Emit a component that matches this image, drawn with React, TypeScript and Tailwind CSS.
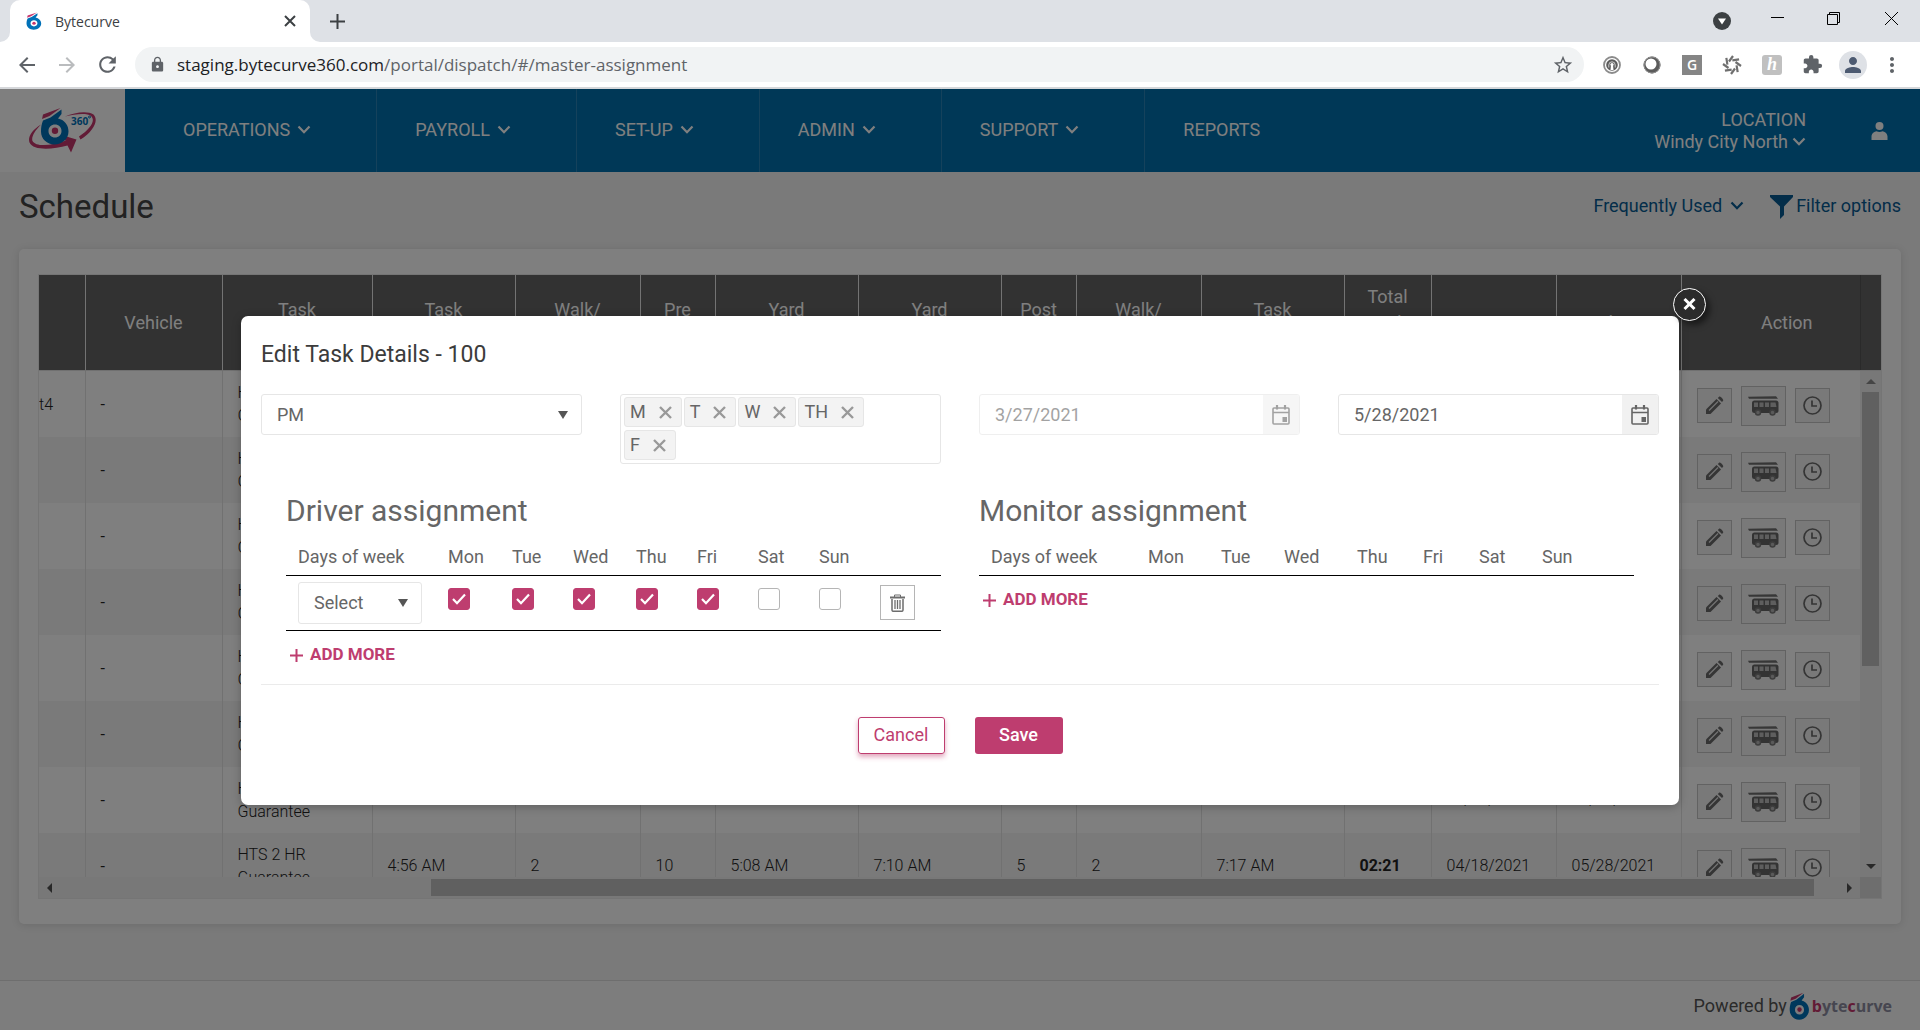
import { ReactNode } from "react";
import {
  MdArrowBack,
  MdArrowForward,
  MdExtension,
  MdLock,
  MdMoreVert,
  MdPerson,
  MdRefresh,
  MdStarBorder,
} from "react-icons/md";

const MENU = [
  { label: "OPERATIONS", hasChildren: true, className: "pl-[58px] pr-[65px]" },
  { label: "PAYROLL", hasChildren: true, className: "pl-[38px] pr-[65px]" },
  { label: "SET-UP", hasChildren: true, className: "pl-[38px] pr-[65px]" },
  { label: "ADMIN", hasChildren: true, className: "pl-[38px] pr-[65px]" },
  { label: "SUPPORT", hasChildren: true, className: "pl-[38px] pr-[65px]" },
  { label: "REPORTS", hasChildren: false, className: "pl-[38px] pr-[38px]" },
];

const COLUMNS = [
  { lines: [""], width: "w-[46px]" },
  { lines: ["Vehicle"], width: "w-[137px]" },
  { lines: ["Task", "Type"], width: "w-[150px]" },
  { lines: ["Task", "Start"], width: "w-[143px]" },
  { lines: ["Walk/", "Drive"], width: "w-[125px]" },
  { lines: ["Pre", "Trip"], width: "w-[75px]" },
  { lines: ["Yard", "Out"], width: "w-[143px]" },
  { lines: ["Yard", "In"], width: "w-[143px]" },
  { lines: ["Post", "Trip"], width: "w-[75px]" },
  { lines: ["Walk/", "Drive"], width: "w-[125px]" },
  { lines: ["Task", "End"], width: "w-[143px]" },
  { lines: ["Total", "Task", "Hours"], width: "w-[87px]" },
  { lines: ["Start Date"], width: "w-[125px]" },
  { lines: ["End Date"], width: "w-[125px]" },
];

const ROWS = ["t4", "", "", "", "", "", "", ""].map((route, id) => ({
  id,
  route,
  vehicle: "-",
  type: ["HTS 2 HR", "Guarantee"],
  cells: ["4:56 AM", "2", "10", "5:08 AM", "7:10 AM", "5", "2", "7:17 AM"],
  total: "02:21",
  start: "04/18/2021",
  end: "05/28/2021",
}));

const DAYS = ["Mon", "Tue", "Wed", "Thu", "Fri", "Sat", "Sun"];
const CHECKED = ["Mon", "Tue", "Wed", "Thu", "Fri"];
const DRIVER_WIDTHS = [
  "w-[150px]",
  "w-[64px]",
  "w-[61px]",
  "w-[63px]",
  "w-[61px]",
  "w-[61px]",
  "w-[61px]",
  "w-[61px]",
];
const MONITOR_WIDTHS = [
  "w-[157px]",
  "w-[73px]",
  "w-[63px]",
  "w-[73px]",
  "w-[66px]",
  "w-[56px]",
  "w-[63px]",
  "w-[61px]",
];

function Chevron() {
  return (
    <svg width="14" height="9" viewBox="0 0 14 9" fill="none">
      <path d="M1.5 1.5 7 7.2l5.5-5.7" stroke="currentColor" strokeWidth="2.2" />
    </svg>
  );
}

function BrandShape() {
  return (
    <>
      <path
        fill="#0071b8"
        fillRule="evenodd"
        d="M41.500 9.500 30.500 17.500 23 20.500C21.500 24 21 28 21 31.500 21 39 27 44.500 34.500 44.500S48.500 39 48.500 31.500C48.500 26 45.500 21.500 41 19.500L38 18.500 41.500 14ZM35 24.500C38.600 24.500 41.500 27 41.500 31S38.600 37.500 35 37.500 28.500 35 28.500 31 31.400 24.500 35 24.500Z"
      />
      <path fill="#c5366c" d="M23 14.500 40.500 8 29.500 16 22 19Z" />
      <circle cx="35" cy="30.800" r="3.200" fill="#c5366c" />
    </>
  );
}

function BrandMark({ width, height }: { width: number; height: number }) {
  return (
    <svg width={width} height={height} viewBox="20 7 30 38" preserveAspectRatio="none">
      <BrandShape />
    </svg>
  );
}

function OrbitLogo() {
  return (
    <svg width="70" height="46" viewBox="8 8 70 46">
      <path
        fill="#c5366c"
        d="M45 16.500C55 12 68 10.500 73.500 14.500 79 20 74 31 60.500 39.500L59 36.500C70.500 29 76 20.500 71 16 66.500 12.500 55 14 45 16.500Z"
      />
      <path
        fill="#c5366c"
        d="M21 24.500C12 30 7.500 37 9.500 42.500 13 51 33 49.500 47.500 45.500L51 52.500 56.500 39.500 43 35.500 45.500 40.500C33 45.500 16 47.500 12.500 41 11 37 15 30.500 21 24.500Z"
      />
      <BrandShape />
      <text x="51" y="25" fontSize="10" fontWeight="700" fill="#0071b8" fontFamily="Open Sans, sans-serif">
        360
      </text>
      <circle cx="69.500" cy="17" r="1" fill="none" stroke="#0071b8" />
    </svg>
  );
}

function BrowserChrome() {
  return (
    <div className="font-['Open_Sans',sans-serif]">
      <div className="flex h-[42px] items-end bg-[#dee1e6] text-[#3c4043]">
        <svg className="h-[10px] w-[10px]" viewBox="0 0 10 10">
          <path d="M10 0v10H0A10 10 0 0 0 10 0Z" fill="#fff" />
        </svg>
        <div className="flex h-[42px] w-[300px] items-center rounded-t-[10px] bg-white pl-4 pr-[14px]">
          <BrandMark width={16} height={18} />
          <span className="ml-[13px] flex-1 text-[14px]">Bytecurve</span>
          <button aria-label="Close tab">
            <svg width="12" height="12" viewBox="0 0 12 12" stroke="currentColor" strokeWidth="2">
              <path d="m1 1 10 10M11 1 1 11" />
            </svg>
          </button>
        </div>
        <svg className="h-[10px] w-[10px]" viewBox="0 0 10 10">
          <path d="M0 0v10h10A10 10 0 0 1 0 0Z" fill="#fff" />
        </svg>
        <button aria-label="New tab" className="ml-[10px] flex h-[42px] items-center">
          <svg width="15" height="15" viewBox="0 0 15 15" stroke="currentColor" strokeWidth="2">
            <path d="M7.500 0v15M0 7.500h15" />
          </svg>
        </button>
        <div className="ml-auto flex h-[42px] items-start pr-[22px] pt-3 text-black">
          <svg className="mr-10" width="18" height="18" viewBox="0 0 18 18">
            <circle cx="9" cy="9" r="9" fill="#3c4043" />
            <path d="M5 6.500h8l-4 6Z" fill="#fff" />
          </svg>
          <button aria-label="Minimize" className="mr-[43px]">
            <svg width="13" height="13" viewBox="0 0 13 13">
              <path d="M0 5.500h13" stroke="currentColor" />
            </svg>
          </button>
          <button aria-label="Restore" className="mr-[45px]">
            <svg width="13" height="13" viewBox="0 0 13 13" fill="none" stroke="currentColor">
              <path d="M.5 2.500h10v10H.5zM2.500 2.500v-2h10v10h-2" />
            </svg>
          </button>
          <button aria-label="Close window">
            <svg width="13" height="13" viewBox="0 0 13 13" stroke="currentColor">
              <path d="m0 0 13 13M13 0 0 13" />
            </svg>
          </button>
        </div>
      </div>
      <div className="flex h-[47px] items-center border-b-2 border-[#d5d7da] bg-white pl-[15px] pr-4 text-[#5f6368]">
        <button aria-label="Back" className="mr-4">
          <MdArrowBack size={24} />
        </button>
        <button aria-label="Forward" className="mr-4 text-[#babcbe]">
          <MdArrowForward size={24} />
        </button>
        <button aria-label="Reload" className="mr-[15px]">
          <MdRefresh size={25} />
        </button>
        <div className="flex h-[35px] flex-1 items-center rounded-full bg-[#f1f3f4] pl-[14px] pr-[10px]">
          <MdLock size={17} />
          <span className="ml-[11px] flex-1 text-[17px]">
            <span className="text-[#202124]">staging.bytecurve360.com</span>
            /portal/dispatch/#/master-assignment
          </span>
          <button aria-label="Bookmark this page">
            <MdStarBorder size={22} />
          </button>
        </div>
        <div className="ml-[18px] flex items-center gap-5">
          <svg width="20" height="20" viewBox="0 0 20 20" fill="none">
            <circle cx="10" cy="10" r="8" stroke="#8b8b8b" strokeWidth="1.800" />
            <circle cx="10" cy="10" r="5.800" fill="#5c5c5c" />
            <path d="M6.800 12.500V10a3.200 3.200 0 0 1 6.400 0v2.500" stroke="#ccc" strokeWidth="1" />
            <circle cx="10" cy="9.500" r="1.600" fill="#fff" />
            <path d="M9 10h2l.5 5h-3Z" fill="#fff" />
          </svg>
          <svg width="20" height="20" viewBox="0 0 20 20">
            <circle cx="10" cy="10" r="8.500" fill="#5b5b5b" />
            <circle cx="9" cy="9" r="5.500" fill="#fff" />
            <circle cx="10" cy="10" r="8" fill="none" stroke="#8f8f8f" />
          </svg>
          <span className="flex h-5 w-5 items-center justify-center bg-[#858585] text-[14px] font-semibold text-white">
            G
          </span>
          <svg width="20" height="20" viewBox="0 0 20 20" stroke="#6f6f6f" strokeWidth="2.200">
            {[0, 45, 90, 135, 180, 225, 270, 315].map((angle) => (
              <path key={angle} d="M7 6.500 11 1" transform={`rotate(${angle} 10 10)`} />
            ))}
          </svg>
          <span className="flex h-5 w-5 items-center justify-center rounded-[3px] bg-[#c0c0c0] font-['Liberation_Serif',serif] text-[18px] font-bold italic text-white">
            h
          </span>
          <MdExtension size={21} />
        </div>
        <span className="ml-[16px] flex h-7 w-7 items-center justify-center rounded-full bg-[#dee1e6] text-[#4c5a71]">
          <MdPerson size={24} />
        </span>
        <button aria-label="Browser menu" className="ml-[13px]">
          <MdMoreVert size={24} />
        </button>
      </div>
    </div>
  );
}

function TopNav() {
  return (
    <header className="flex h-[83px] bg-[#0070ae] text-lg text-white">
      <a href="#home" aria-label="Bytecurve 360" className="flex w-[125px] items-center justify-center bg-white">
        <OrbitLogo />
      </a>
      <nav className="flex">
        {MENU.map((item) => (
          <a
            key={item.label}
            href={`#${item.label.toLowerCase()}`}
            className={`flex items-center gap-[7px] border-r border-[#2a84b8] pb-[2px] last:border-r-0 ${item.className}`}
          >
            {item.label}
            {item.hasChildren && <Chevron />}
          </a>
        ))}
      </nav>
      <div className="ml-auto flex items-center pr-8">
        <button className="text-right leading-[22px]">
          LOCATION
          <span className="flex items-center gap-[4px]">
            Windy City North <Chevron />
          </span>
        </button>
        <button aria-label="Account" className="ml-[65px]">
          <svg width="17" height="18" viewBox="0 0 17 18" fill="currentColor">
            <circle cx="8.500" cy="4" r="4" />
            <path d="M.500 18v-3.500c0-3 3-5 5-5.200 2 1 4 1 6 0 2 .2 5 2.200 5 5.200V18Z" />
          </svg>
        </button>
      </div>
    </header>
  );
}

function PencilIcon() {
  return (
    <svg width="19" height="19" viewBox="0 0 19 19">
      <path d="M1 18v-4.500L11.500 3 16 7.500 5.500 18Z" fill="#6a6a6a" />
      <path d="m4 14.500 9-9" stroke="#e5e5e5" strokeWidth="1.200" />
      <path d="m12.800 2 1.300-1.300c1-1 5 3 4 4L17 6Z" fill="#6a6a6a" />
    </svg>
  );
}

function BusIcon() {
  return (
    <svg width="31" height="20" viewBox="0 0 31 20">
      <path d="M0 .8 28 .2l2 2.600H1Z" fill="#6e6e6e" />
      <rect x="4" y="4.500" width="26.500" height="12.500" rx="2.500" fill="#666" />
      <path d="M6 6.500h4v4.500H6zM11.500 6.500h4v4.500h-4zM17 6.500h4v4.500h-4zM22.500 6.500h5l1 4.500h-6z" fill="#bdbdbd" />
      <circle cx="10" cy="16.500" r="2.500" fill="#b5b5b5" stroke="#7a7a7a" strokeWidth="1.500" />
      <circle cx="24.500" cy="16.500" r="2.500" fill="#b5b5b5" stroke="#7a7a7a" strokeWidth="1.500" />
    </svg>
  );
}

function ClockIcon() {
  return (
    <svg width="19" height="19" viewBox="0 0 19 19" fill="none" stroke="#6a6a6a" strokeWidth="1.700">
      <circle cx="9.500" cy="9.500" r="8.500" />
      <path d="M9 4.500V10h5" />
    </svg>
  );
}

function IconButton({ label, className, children }: { label: string; className: string; children: ReactNode }) {
  return (
    <button
      aria-label={label}
      className={`flex items-center justify-center border border-[#c4c4c4] bg-[#f2f2f2] ${className}`}
    >
      {children}
    </button>
  );
}

function ColGroup() {
  return (
    <colgroup>
      {COLUMNS.map((column, i) => (
        <col key={i} className={column.width} />
      ))}
      <col />
    </colgroup>
  );
}

function ScheduleGrid() {
  return (
    <div className="border border-[#ebebeb]">
      <div className="bg-[#646464] pr-[20px]">
        <table className="h-[95px] w-full table-fixed border-collapse text-lg leading-[26px] text-white">
          <ColGroup />
          <thead>
            <tr>
              {COLUMNS.map((column, i) => (
                <th key={i} className="border-r border-[#e6e6e6] p-0 font-normal">
                  {column.lines.map((line) => (
                    <div key={line}>{line}</div>
                  ))}
                </th>
              ))}
              <th className="border-r border-[#555] p-0 pl-8 font-normal">Action</th>
            </tr>
          </thead>
        </table>
      </div>
      <div className="flex h-[507px] border-t border-[#e0e0e0]">
        <div className="flex-1 overflow-hidden">
          <table className="w-full table-fixed border-collapse text-base font-light leading-[23px] text-[#222]">
            <ColGroup />
            <tbody>
              {ROWS.map((row) => (
                <tr key={row.id} className="h-[66px] even:bg-[#f4f4f4] [&>td]:border-r [&>td]:border-[#e2e2e2]">
                  <td className="p-0">{row.route}</td>
                  <td className="py-0 pl-[15px] font-normal">{row.vehicle}</td>
                  <td className="py-0 pl-[15px]">
                    {row.type.map((line) => (
                      <div key={line}>{line}</div>
                    ))}
                  </td>
                  {row.cells.map((cell, i) => (
                    <td key={i} className="pb-[2px] pl-[15px]">
                      {cell}
                    </td>
                  ))}
                  <td className="pb-[2px] pl-[15px] font-bold">{row.total}</td>
                  <td className="pb-[2px] pl-[15px]">{row.start}</td>
                  <td className="pb-[2px] pl-[15px]">{row.end}</td>
                  <td className="border-r-0! pl-[15px] pt-[3px]">
                    <div className="flex items-center gap-[9px]">
                      <IconButton label="Edit task" className="h-[35px] w-[35px]">
                        <PencilIcon />
                      </IconButton>
                      <IconButton label="Vehicle assignment" className="h-[40px] w-[45px]">
                        <BusIcon />
                      </IconButton>
                      <IconButton label="Task history" className="h-[35px] w-[35px]">
                        <ClockIcon />
                      </IconButton>
                    </div>
                  </td>
                </tr>
              ))}
            </tbody>
          </table>
        </div>
        <div className="flex w-[21px] flex-col items-center bg-[#f1f1f1]">
          <svg className="my-[8px] h-[5px] w-[10px]" viewBox="0 0 10 5">
            <path d="M5 0 10 5H0Z" fill="#8a8a8a" />
          </svg>
          <div className="h-[274px] w-[17px] bg-[#c1c1c1]" />
          <svg className="mb-[8px] mt-auto h-[5px] w-[10px]" viewBox="0 0 10 5">
            <path d="M5 5 10 0H0Z" fill="#505050" />
          </svg>
        </div>
      </div>
      <div className="flex">
        <div className="flex h-[21px] flex-1 items-center bg-[#f1f1f1] px-[8px]">
          <svg width="5" height="10" viewBox="0 0 5 10">
            <path d="M0 5 5 0v10Z" fill="#505050" />
          </svg>
          <div className="ml-[21%] mr-[33px] h-[17px] flex-1 bg-[#c1c1c1]" />
          <svg width="5" height="10" viewBox="0 0 5 10">
            <path d="M5 5 0 0v10Z" fill="#505050" />
          </svg>
        </div>
        <div className="w-[21px] bg-[#dcdcdc]" />
      </div>
    </div>
  );
}

function SchedulePage() {
  return (
    <main className="flex-1 px-[19px]">
      <div className="flex h-[77px] items-center pb-[7px]">
        <h1 className="text-[33px] text-[#444]">Schedule</h1>
        <div className="ml-auto flex items-center pb-[3px] text-lg text-[#075a93]">
          <button className="flex items-center gap-[8px]">
            Frequently Used <Chevron />
          </button>
          <button className="ml-[26px] flex items-center gap-[3px]">
            <svg className="mt-[3px]" width="23" height="24" viewBox="0 0 23 24" fill="currentColor">
              <path d="M0 0h23v2l-9 9.500V20l-4 4V11.500L0 2Z" />
            </svg>
            Filter options
          </button>
        </div>
      </div>
      <section className="rounded-[5px] bg-white px-[19px] py-[25px] shadow-[0_1px_8px_rgba(0,0,0,0.12)]">
        <ScheduleGrid />
      </section>
    </main>
  );
}

function Footer() {
  return (
    <footer className="flex h-[50px] items-center justify-end border-t border-[#dcdcdc] bg-[#fafafa] pr-[28px] text-lg text-[#555]">
      Powered by
      <span className="ml-[2px] flex items-center gap-[2px]">
        <BrandMark width={21} height={28} />
        <span className="font-['Open_Sans',sans-serif] text-base font-bold text-[#8c8ca0]">
          <span className="text-[#c5366c]">b</span>yte<span className="text-[#c5366c]">c</span>urve
        </span>
      </span>
    </footer>
  );
}

function SelectBox({ label, value, className }: { label: string; value: string; className: string }) {
  return (
    <div className={`grid items-center rounded-[3px] border border-[#e6e6e6] ${className}`}>
      <select
        aria-label={label}
        className="col-start-1 row-start-1 h-full w-full appearance-none bg-transparent pl-[15px] text-lg text-[#666]"
      >
        <option>{value}</option>
      </select>
      <svg
        className="pointer-events-none col-start-1 row-start-1 mr-[13px] justify-self-end"
        width="10"
        height="8"
        viewBox="0 0 10 8"
      >
        <path d="M0 0h10L5 8Z" fill="#555" />
      </svg>
    </div>
  );
}

function DayTag({ day }: { day: string }) {
  return (
    <span className="flex h-[30px] items-center gap-[13px] rounded-[3px] border border-[#e6e6e6] bg-[#f3f3f3] pl-[5px] pr-[9px] text-lg text-[#666]">
      {day}
      <button aria-label={`Remove ${day}`}>
        <svg width="13" height="13" viewBox="0 0 13 13" stroke="#999" strokeWidth="2.400">
          <path d="m1 1 11 11M12 1 1 12" />
        </svg>
      </button>
    </span>
  );
}

function DateField({ label, value, disabled }: { label: string; value: string; disabled?: boolean }) {
  return (
    <div
      className={`flex h-[41px] overflow-hidden rounded-[3px] border border-[#e6e6e6] ${disabled ? "opacity-60" : ""}`}
    >
      <input
        aria-label={label}
        defaultValue={value}
        disabled={disabled}
        className="min-w-0 flex-1 pl-[15px] text-lg text-[#666]"
      />
      <button
        aria-label={`Pick ${label.toLowerCase()}`}
        disabled={disabled}
        className="flex w-[36px] items-center justify-center bg-[#f1f1f1]"
      >
        <svg width="18" height="20" viewBox="0 0 18 20" fill="none" stroke="#656565" strokeWidth="1.600">
          <rect x="1" y="3" width="16" height="16" rx="1" />
          <path d="M1 7.500h16" />
          <path d="M5 0v4.500M13 0v4.500" strokeWidth="2.200" />
          <path d="M10.500 12h4.500v5h-4.500z" fill="#656565" stroke="none" />
        </svg>
      </button>
    </div>
  );
}

function DayCheckbox({ day }: { day: string }) {
  return (
    <span className="grid h-[22px] w-[22px] place-items-center">
      <input
        type="checkbox"
        aria-label={day}
        defaultChecked={CHECKED.includes(day)}
        className="peer col-start-1 row-start-1 h-[22px] w-[22px] appearance-none rounded-[3px] border border-[#b5b5b5] checked:border-[#be3d6f] checked:bg-[#be3d6f]"
      />
      <svg
        className="pointer-events-none invisible col-start-1 row-start-1 peer-checked:visible"
        width="14"
        height="12"
        viewBox="0 0 14 12"
        fill="none"
      >
        <path d="m1 6 4 4.200L13 1.500" stroke="#fff" strokeWidth="2.200" />
      </svg>
    </span>
  );
}

function DaysHead({ widths }: { widths: string[] }) {
  return (
    <thead>
      <tr className="border-b border-black">
        {["Days of week", ...DAYS].map((title, i) => (
          <th key={title} className={`h-[35px] p-0 pb-[1px] pl-[12px] text-left font-normal ${widths[i]}`}>
            {title}
          </th>
        ))}
        <th />
      </tr>
    </thead>
  );
}

function AddMore() {
  return (
    <button className="flex items-center gap-[7px] pl-[4px] text-[17px] font-bold leading-6 text-[#be3d6f]">
      <svg className="mt-[3px]" width="13" height="13" viewBox="0 0 13 13" stroke="currentColor" strokeWidth="2">
        <path d="M6.500 0v13M0 6.500h13" />
      </svg>
      ADD MORE
    </button>
  );
}

function EditTaskModal() {
  return (
    <div
      role="dialog"
      aria-labelledby="modal-title"
      className="relative mx-auto mt-[227px] w-[calc(75%-2px)] rounded-[7px] bg-white px-[20px] pb-[51px] pt-[23px] text-lg text-[#666] shadow-[0_2px_10px_rgba(0,0,0,0.25)]"
    >
      <button
        aria-label="Close"
        className="absolute -right-[27px] -top-[28px] flex h-[33px] w-[33px] items-center justify-center rounded-full border-[1px] border-white bg-[#2b2b2b] shadow-[4px_4px_6px_rgba(0,0,0,0.5)]"
      >
        <svg width="13" height="13" viewBox="0 0 13 13" stroke="#fff" strokeWidth="3">
          <path d="m1.500 1 10 10M11.500 1l-10 10" />
        </svg>
      </button>

      <h2 id="modal-title" className="text-[23px] leading-8 text-[#3c3c3c]">
        Edit Task Details - 100
      </h2>

      <div className="mt-[23px] grid grid-cols-4 items-start gap-[38px]">
        <SelectBox label="Shift" value="PM" className="h-[41px]" />
        <div className="flex min-h-[70px] flex-wrap content-start gap-x-[2px] gap-y-[3px] rounded-[3px] border border-[#e6e6e6] py-[2px] pl-[3px] pr-[60px]">
          {["M", "T", "W", "TH", "F"].map((day) => (
            <DayTag key={day} day={day} />
          ))}
        </div>
        <DateField label="Start date" value="3/27/2021" disabled />
        <DateField label="End date" value="5/28/2021" />
      </div>

      <div className="mt-[25px] grid grid-cols-2 gap-[38px] px-[25px]">
        <section>
          <h3 className="text-[30px] leading-[44px]">Driver assignment</h3>
          <table className="mt-[7px] w-full table-fixed border-collapse">
            <DaysHead widths={DRIVER_WIDTHS} />
            <tbody>
              <tr className="border-b border-black">
                <td className="py-[6px] pl-[12px]">
                  <SelectBox label="Driver" value="Select" className="h-[42px] w-[124px]" />
                </td>
                {DAYS.map((day) => (
                  <td key={day} className="pb-[8px] pl-[12px]">
                    <DayCheckbox day={day} />
                  </td>
                ))}
                <td className="pl-[12px]">
                  <button
                    aria-label="Delete driver"
                    className="flex h-[35px] w-[35px] items-center justify-center border border-[#b5b5b5]"
                  >
                    <svg width="15" height="18" viewBox="0 0 15 18" fill="none" stroke="#6d6d6d">
                      <path d="M0 3.500h15" strokeWidth="2" />
                      <path d="M4.500 3V1h6v2" />
                      <path d="M2 5v11c0 .8.500 1.300 1.300 1.300h8.400c.8 0 1.300-.5 1.300-1.300V5" strokeWidth="1.500" />
                      <path d="M5 6v9M7.500 6v9M10 6v9" strokeWidth="1.300" />
                    </svg>
                  </button>
                </td>
              </tr>
            </tbody>
          </table>
          <div className="mt-[11px]">
            <AddMore />
          </div>
        </section>
        <section>
          <h3 className="text-[30px] leading-[44px]">Monitor assignment</h3>
          <table className="mt-[7px] w-full table-fixed border-collapse">
            <DaysHead widths={MONITOR_WIDTHS} />
          </table>
          <div className="mt-[11px]">
            <AddMore />
          </div>
        </section>
      </div>

      <div className="mt-[18px] flex justify-center gap-[30px] border-t border-[#ebebeb] pt-[32px]">
        <button className="h-[37px] w-[87px] rounded-[3px] border border-[#be3d6f] text-[#be3d6f] shadow-[0_3px_5px_rgba(190,61,111,0.45)]">
          Cancel
        </button>
        <button className="h-[37px] w-[88px] rounded-[3px] bg-[#be3d6f] font-medium text-white">Save</button>
      </div>
    </div>
  );
}

export default function App() {
  return (
    <div className="flex min-h-screen flex-col">
      <BrowserChrome />
      <div className="relative flex flex-1 flex-col bg-[#f4f4f4] font-['Roboto',sans-serif]">
        <TopNav />
        <SchedulePage />
        <Footer />
        {/* Dimmed backdrop with the task dialog */}
        <div className="absolute inset-0 bg-black/50">
          <EditTaskModal />
        </div>
      </div>
    </div>
  );
}
